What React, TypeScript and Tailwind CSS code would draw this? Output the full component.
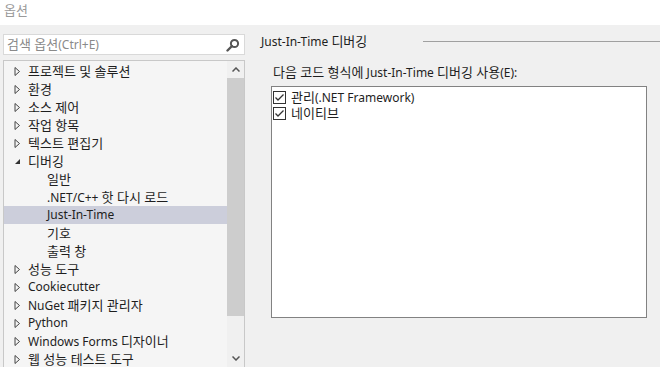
import { FC } from 'react';

type Item = { label: string; level: 0 | 1; arrow?: 'closed' | 'open'; selected?: boolean };

const items: Item[] = [
  { label: '프로젝트 및 솔루션', level: 0, arrow: 'closed' },
  { label: '환경', level: 0, arrow: 'closed' },
  { label: '소스 제어', level: 0, arrow: 'closed' },
  { label: '작업 항목', level: 0, arrow: 'closed' },
  { label: '텍스트 편집기', level: 0, arrow: 'closed' },
  { label: '디버깅', level: 0, arrow: 'open' },
  { label: '일반', level: 1 },
  { label: '.NET/C++ 핫 다시 로드', level: 1 },
  { label: 'Just-In-Time', level: 1, selected: true },
  { label: '기호', level: 1 },
  { label: '출력 창', level: 1 },
  { label: '성능 도구', level: 0, arrow: 'closed' },
  { label: 'Cookiecutter', level: 0, arrow: 'closed' },
  { label: 'NuGet 패키지 관리자', level: 0, arrow: 'closed' },
  { label: 'Python', level: 0, arrow: 'closed' },
  { label: 'Windows Forms 디자이너', level: 0, arrow: 'closed' },
  { label: '웹 성능 테스트 도구', level: 0, arrow: 'closed' },
];

// Hangul in the original font runs a bit larger than the latin text
const Txt: FC<{ text: string }> = ({ text }) => (
  <>
    {text.split(/([\uac00-\ud7a3]+(?: [\uac00-\ud7a3]+)*)/).map((part, i) =>
      /[\uac00-\ud7a3]/.test(part) ? (
        <span key={i} className="text-[13px]">
          {part}
        </span>
      ) : (
        <span key={i}>{part}</span>
      )
    )}
  </>
);

const Arrow: FC<{ kind: 'closed' | 'open' }> = ({ kind }) =>
  kind === 'closed' ? (
    <svg width="7" height="9" viewBox="0 0 7 9" className="block">
      <path d="M1 0.5 L5.5 4.5 L1 8.5 Z" fill="none" stroke="#444" strokeWidth="1" />
    </svg>
  ) : (
    <svg width="7" height="7" viewBox="0 0 7 7" className="block">
      <path d="M6 1 L6 6 L1 6 Z" fill="#333" />
    </svg>
  );

const CheckBox: FC = () => (
  <svg width="13" height="13" viewBox="0 0 13 13" className="block">
    <rect x="0.5" y="0.5" width="12" height="12" fill="#fff" stroke="#333" />
    <path d="M2.5 6.5 L5 9 L10.5 3.5" fill="none" stroke="#333" strokeWidth="1.3" />
  </svg>
);

const App: FC = () => {
  return (
    <div
      className="flex h-[367px] w-[660px] flex-col overflow-hidden bg-[#f0f0f0] text-[12px] text-[#1e1e1e]"
      style={{ fontFamily: '"Noto Sans", "Noto Sans CJK KR", sans-serif' }}
    >
      <div className="h-[25px] shrink-0 bg-white pl-[4px] pt-[1px] text-[13px] leading-[18px] text-[#9a9a9a]">옵션</div>

      <div className="flex min-h-0 flex-1">
        <div className="flex w-[245px] shrink-0 flex-col pl-[3px] pt-[9px]">
          <div className="flex h-[21px] items-center border border-[#d9d9d9] bg-white pl-[3px] pr-[4px]">
            <span className="flex-1 whitespace-nowrap leading-none text-[#8a8a8a]">
              <Txt text="검색 옵션" />(Ctrl+E)
            </span>
            <svg width="14" height="14" viewBox="0 0 14 14">
              <circle cx="8.5" cy="5.5" r="3.6" fill="none" stroke="#555" strokeWidth="2" />
              <path d="M6 8 L1.5 12.5" stroke="#555" strokeWidth="2.4" strokeLinecap="round" />
            </svg>
          </div>

          <div className="mt-[5px] flex min-h-0 flex-1 border-l border-t border-r border-[#c8c8c8] bg-[#f5f5f5]">
            <div className="flex-1 pt-[1px]">
              {items.map((it) => (
                <div
                  key={it.label}
                  className={`flex h-[18px] items-center ${it.selected ? 'bg-[#cccedb]' : ''}`}
                >
                  <div className="flex w-[24px] shrink-0 justify-end pr-[7px]">
                    {it.arrow && <Arrow kind={it.arrow} />}
                  </div>
                  <span className={`whitespace-nowrap leading-none ${it.level === 1 ? 'pl-[19px]' : ''}`}>
                    <Txt text={it.label} />
                  </span>
                </div>
              ))}
            </div>
            <div className="flex w-[17px] shrink-0 flex-col bg-[#f0f0f0]">
              <div className="flex h-[17px] items-center justify-center">
                <svg width="8" height="5" viewBox="0 0 8 5">
                  <path d="M0.5 4.5 L4 1 L7.5 4.5" fill="none" stroke="#555" strokeWidth="1.5" />
                </svg>
              </div>
              <div className="h-[238px] bg-[#cdcdcd]" />
              <div className="flex-1" />
              <div className="flex h-[17px] items-center justify-center">
                <svg width="8" height="5" viewBox="0 0 8 5">
                  <path d="M0.5 0.5 L4 4 L7.5 0.5" fill="none" stroke="#555" strokeWidth="1.5" />
                </svg>
              </div>
            </div>
          </div>
        </div>

        <div className="flex flex-1 flex-col pl-[16px] pt-[8px]">
          <div className="flex items-center">
            <span className="whitespace-nowrap leading-[16px]">
              <Txt text="Just-In-Time 디버깅" />
            </span>
            <div className="ml-auto h-px w-[237px] bg-[#a0a0a0]" />
          </div>
          <div className="mt-[14px] whitespace-nowrap pl-[12px] leading-[16px]">
            <Txt text="다음 코드 형식에 Just-In-Time 디버깅 사용(E):" />
          </div>
          <div className="ml-[10px] mr-[13px] mt-[5px] h-[232px] border border-[#828282] bg-white pl-[1px] pt-[2px]">
            {['관리(.NET Framework)', '네이티브'].map((t) => (
              <div key={t} className="flex h-[16px] items-center gap-[5px]">
                <CheckBox />
                <span className="whitespace-nowrap leading-none">
                  <Txt text={t} />
                </span>
              </div>
            ))}
          </div>
        </div>
      </div>
    </div>
  );
};

export default App;
